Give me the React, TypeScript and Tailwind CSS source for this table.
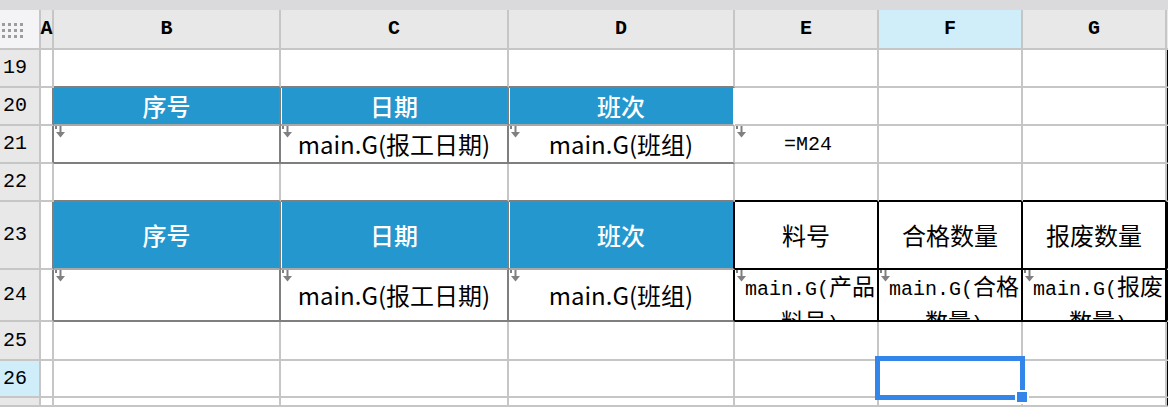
import React from "react";

const ROWS = [19, 20, 21, 22, 23, 24, 25, 26, 27];
const COLS = ["A", "B", "C", "D", "E", "F", "G", ""];

const cjk = "font-['Noto_Sans_CJK_SC',sans-serif]";
const mono = "font-['Liberation_Mono','Noto_Sans_CJK_SC',monospace]";

const TABLE_COLS = ["B", "C", "D"];
const BOX_COLS = ["E", "F", "G"];

const rightBorder = (row: number, col: string) => {
  if (col === "") return "border-r-0";
  if (row === 20 && col === "D") return "border-r-white";
  if ([20, 21, 23, 24].includes(row) && ["A", "B", "C"].includes(col)) return "border-r-[#7f7f7f]";
  if ([23, 24].includes(row) && ["D", "E", "F", "G"].includes(col)) return "border-r-black";
  return "border-r-[#c6c6c6]";
};

const bottomBorder = (row: number, col: string) => {
  if (TABLE_COLS.includes(col) && [19, 21, 22, 24].includes(row)) return "border-b-[#7f7f7f]";
  if (TABLE_COLS.includes(col) && [20, 23].includes(row)) return "border-b-[#a8a8a8]";
  if (BOX_COLS.includes(col) && [22, 23, 24].includes(row)) return "border-b-black";
  return "border-b-[#c6c6c6]";
};

const DropArrow = () => (
  <svg className="absolute left-px top-0" width="11" height="13" viewBox="0 0 11 13" fill="#808080">
    <rect x="0" y="0" width="2" height="3" />
    <rect x="4.5" y="0" width="2" height="8" />
    <polygon points="1,6 10,6 5.5,11.5" />
  </svg>
);

const HeadText = ({ children }: { children: React.ReactNode }) => (
  <span className={`${cjk} text-[24px] font-medium text-white`}>{children}</span>
);

const FieldText = ({ children }: { children: React.ReactNode }) => (
  <span className={`${cjk} text-[24px] text-black whitespace-nowrap`}>{children}</span>
);

const MonoField = ({ head, tail }: { head: string; tail: string }) => (
  <div className="w-full pl-2 text-center leading-[30px] text-black">
    <div className="whitespace-nowrap">
      <span className={`${mono} text-[20px]`}>main.G(</span>
      <span className={`${cjk} text-[23px]`}>{head}</span>
    </div>
    <div className="whitespace-nowrap">
      <span className={`${cjk} text-[23px]`}>{tail}</span>
      <span className={`${mono} text-[20px]`}>)</span>
    </div>
  </div>
);

const content: Record<string, React.ReactNode> = {
  "20-B": <HeadText>序号</HeadText>,
  "20-C": <HeadText>日期</HeadText>,
  "20-D": <HeadText>班次</HeadText>,
  "21-C": <FieldText>main.G(报工日期)</FieldText>,
  "21-D": <FieldText>main.G(班组)</FieldText>,
  "21-E": <span className={`${mono} pl-1 pt-[2px] text-[20px] text-black`}>=M24</span>,
  "23-B": <HeadText>序号</HeadText>,
  "23-C": <HeadText>日期</HeadText>,
  "23-D": <HeadText>班次</HeadText>,
  "23-E": <FieldText>料号</FieldText>,
  "23-F": <FieldText>合格数量</FieldText>,
  "23-G": <FieldText>报废数量</FieldText>,
  "24-C": <FieldText>main.G(报工日期)</FieldText>,
  "24-D": <FieldText>main.G(班组)</FieldText>,
  "24-E": <MonoField head="产品" tail="料号" />,
  "24-F": <MonoField head="合格" tail="数量" />,
  "24-G": <MonoField head="报废" tail="数量" />,
};

const hasArrow = (row: number, col: string) =>
  (row === 21 && ["B", "C", "D", "E"].includes(col)) ||
  (row === 24 && ["B", "C", "D", "E", "F", "G"].includes(col));

const BodyCell = ({ row, col }: { row: number; col: string }) => {
  const key = `${row}-${col}`;
  const blue = (row === 20 || row === 23) && TABLE_COLS.includes(col);
  const gap = blue && col !== "B" ? "shadow-[inset_1px_0_0_#fff]" : "";
  const align = row === 24 && BOX_COLS.includes(col) ? "items-start" : "items-center";
  return (
    <div
      className={`relative flex ${align} justify-center overflow-hidden border-r-2 border-b-2 ${rightBorder(row, col)} ${bottomBorder(row, col)} ${blue ? "bg-[#2497cf]" : "bg-white"} ${gap}`}
    >
      {hasArrow(row, col) && <DropArrow />}
      {content[key]}
    </div>
  );
};

const ColHeader = ({ name }: { name: string }) => (
  <div
    className={`flex items-center justify-center border-b-2 border-[#c6c6c6] ${name ? "border-r-2" : ""} ${name === "F" ? "bg-[#d0eefa]" : "bg-[#e8e8e8]"} ${mono} text-[20px] font-bold text-black`}
  >
    {name}
  </div>
);

const RowHeader = ({ n }: { n: number }) => (
  <div
    className={`flex items-center border-r-2 border-b-2 border-[#c6c6c6] pl-[3px] ${n === 26 ? "bg-[#d0eefa]" : "bg-[#e8e8e8]"} ${mono} text-[20px] text-black`}
  >
    {n === 27 ? "" : n}
  </div>
);

const Corner = () => (
  <div className="flex items-center border-r-2 border-b-2 border-[#c6c6c6] bg-[#f4f4f6] pl-[2px] pt-[2px]">
    <div className="grid grid-cols-[3px_3px_3px_3px] gap-[3px]">
      {Array.from({ length: 12 }).map((_, i) => (
        <span key={i} className="h-[3px] w-[3px] bg-[#9c9c9c]" />
      ))}
    </div>
  </div>
);

export default function App() {
  return (
    <div className="relative h-[407px] w-[1168px] overflow-hidden bg-white">
      <div className="h-[10px] bg-[#dadadc]" />
      <div className="grid h-[397px] grid-cols-[41px_13px_227px_228px_226px_144px_144px_144px_1fr] grid-rows-[40px_38px_38px_38px_38px_68px_52px_39px_37px_1fr]">
        <Corner />
        {COLS.map((c, i) => (
          <ColHeader key={i} name={c} />
        ))}
        {ROWS.map((r) => (
          <React.Fragment key={r}>
            <RowHeader n={r} />
            {COLS.map((c, i) => (
              <BodyCell key={i} row={r} col={c} />
            ))}
          </React.Fragment>
        ))}
      </div>
      {/* selected cell F26 */}
      <div className="absolute left-[875px] top-[356px] h-[44px] w-[150px] border-[5px] border-[#3385ea]" />
      <div className="absolute left-[1015px] top-[390px] h-[14px] w-[14px] border-2 border-white bg-[#3385ea]" />
    </div>
  );
}
